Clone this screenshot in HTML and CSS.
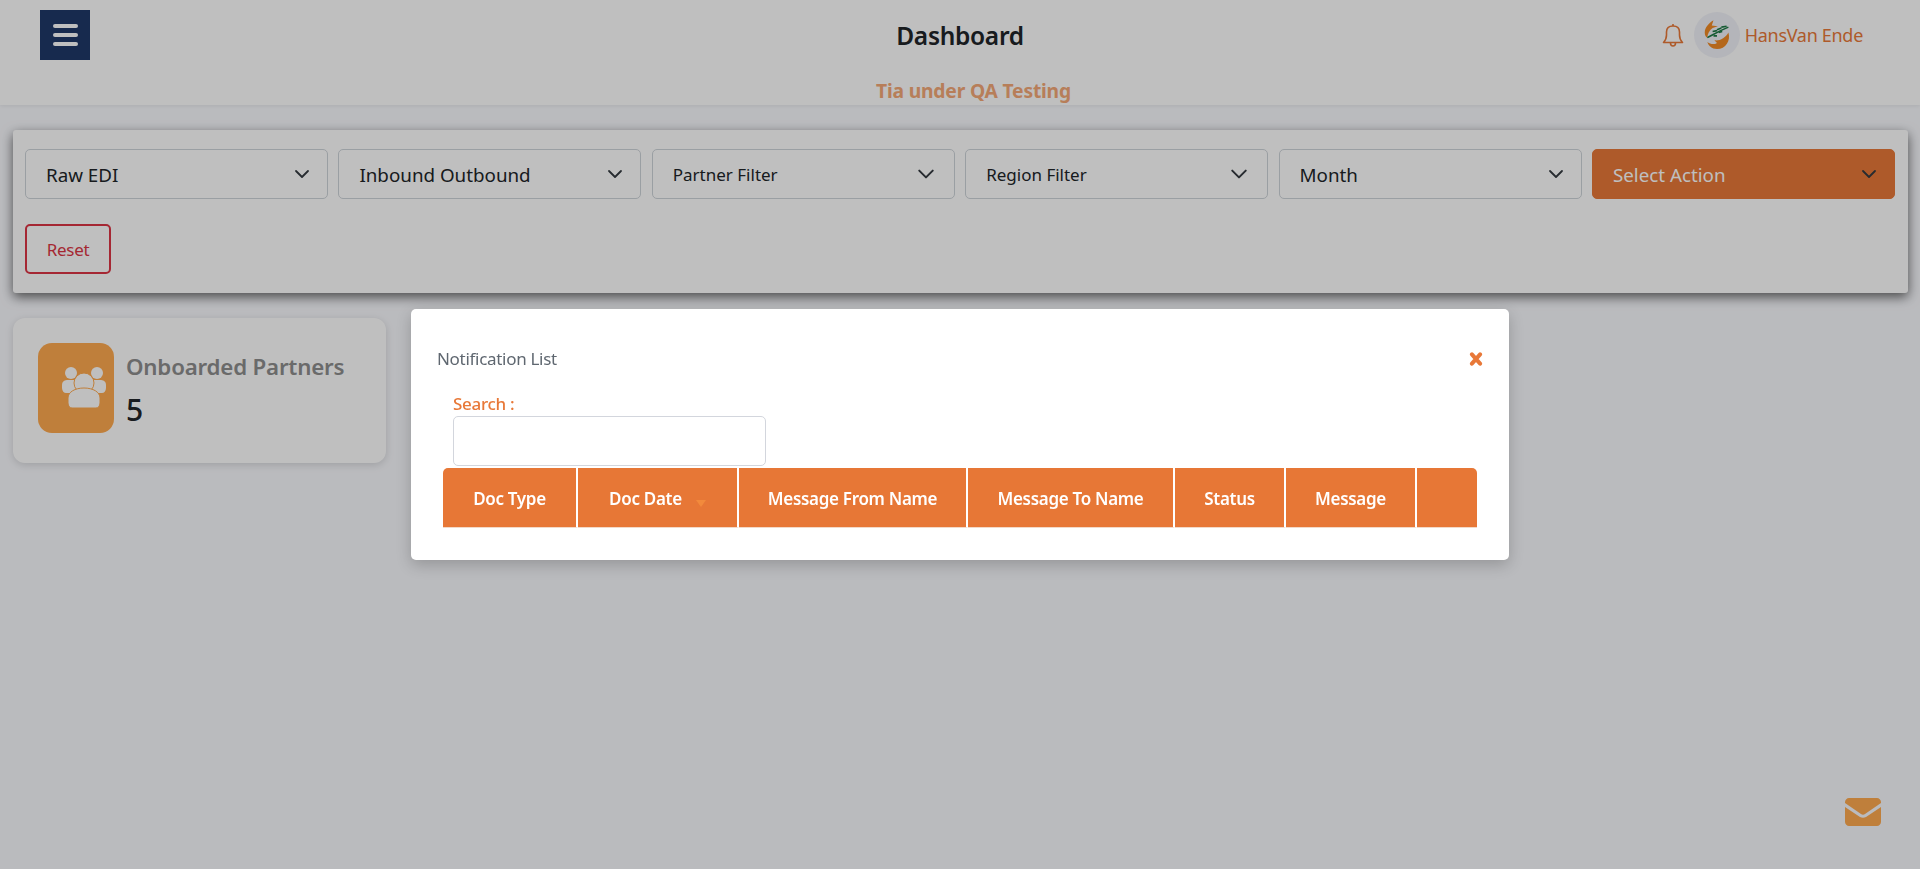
FILE: index.html
```html
<!DOCTYPE html>
<html lang="en">

<head>
    <meta charset="UTF-8">
    <meta name="viewport" content="width=device-width, initial-scale=1.0">
    <title>Dashboard</title>
    <link rel="stylesheet" href="styles.css">
</head>

<body>
    <header class="top-bar">
        <div class="top-row">
            <button type="button" class="menu-btn" aria-label="Menu">
                <span></span><span></span><span></span>
            </button>
            <h1 class="page-title">Dashboard</h1>
            <div class="user-box">
                <svg class="bell" viewBox="0 0 22 24" fill="none" stroke="#e87938" stroke-width="1.6">
                    <path d="M1.500 19.500c2-2 3-4 3-7.500V9c0-3.800 2.600-6 6.500-6s6.500 2.200 6.500 6v3c0 3.500 1 5.500 3 7.500z" stroke-linejoin="round"/>
                    <path d="M11 1v2M8.500 20c0 2 1 3 2.500 3s2.500-1 2.500-3"/>
                </svg>
                <div class="avatar">
                    <svg viewBox="0 0 32 34">
                        <path d="M12 0C7 3 2 8 2 14c0 3 1 5 3 6 0-4 2-8 6-11l6-2-7-1z" fill="#f08a24"/>
                        <path d="M29 14c3 9-3 19-13 19-6 0-10-4-11-8 4 3 8 3 11 1l-3-3c6 1 13-3 16-9z" fill="#f08a24"/>
                        <path d="M5 20c6-3 12-7 24-12" fill="none" stroke="#1e7a46" stroke-width="1.800"/>
                        <path d="M11 13l5-1M16 11l5-2M21 8l6-1M12 18l4 0M18 14l4-1" fill="none" stroke="#1e7a46" stroke-width="1.800"/>
                    </svg>
                </div>
                <span class="user-name">HansVan Ende</span>
            </div>
        </div>
        <p class="env-note">Tia under QA Testing</p>
    </header>

    <main class="content">
        <section class="filter-card">
            <select class="filter"><option>Raw EDI</option></select>
            <select class="filter"><option>Inbound Outbound</option></select>
            <select class="filter filter-small"><option>Partner Filter</option></select>
            <select class="filter filter-small"><option>Region Filter</option></select>
            <select class="filter"><option>Month</option></select>
            <select class="filter filter-action"><option>Select Action</option></select>
            <button type="button" class="reset-btn">Reset</button>
        </section>

        <section class="stat-card">
            <div class="stat-icon">
                <svg viewBox="0 0 44 42" fill="#fff">
                    <circle cx="9" cy="6" r="6"/>
                    <circle cx="35" cy="6" r="6"/>
                    <path d="M0 18c0-4 3-5 6-5h32c3 0 6 1 6 5v3c0 3-2 5-4 5H4c-2 0-4-2-4-5z"/>
                    <circle cx="22" cy="16" r="10" stroke="#ffaa4f" stroke-width="1"/>
                    <path d="M6 36v-5c0-6 7-10 16-10s16 4 16 10v5c0 3-2 5-4 5H10c-2 0-4-2-4-5z" stroke="#ffaa4f" stroke-width="1"/>
                </svg>
            </div>
            <div class="stat-text">
                <div class="stat-label">Onboarded Partners</div>
                <div class="stat-value">5</div>
            </div>
        </section>
    </main>

    <svg class="mail-icon" viewBox="0 0 36 28">
        <path d="M4 0h28c2 0 4 2 4 4v1L20 16c-1 1-3 1-4 0L0 5V4c0-2 2-4 4-4z" fill="#ffaa4f"/>
        <path d="M0 9l15 10c2 1 4 1 6 0L36 9v15c0 2-2 4-4 4H4c-2 0-4-2-4-4z" fill="#ffaa4f"/>
    </svg>

    <div class="backdrop"></div>

    <div class="modal">
        <div class="modal-head">
            <span class="modal-title">Notification List</span>
            <svg class="close-icon" viewBox="0 0 12 12">
                <path d="M2.500 2l7 8M9.500 2l-7 8" stroke="#e87838" stroke-width="3.400" stroke-linecap="round"/>
            </svg>
        </div>
        <div class="search-box">
            <label for="search">Search :</label>
            <input type="text" id="search">
        </div>
        <table class="notif-table">
            <thead>
                <tr>
                    <th class="col-type">Doc Type</th>
                    <th class="col-date">Doc Date <span class="sort-caret"></span></th>
                    <th class="col-from">Message From Name</th>
                    <th class="col-to">Message To Name</th>
                    <th class="col-status">Status</th>
                    <th class="col-msg">Message</th>
                    <th></th>
                </tr>
            </thead>
        </table>
    </div>
</body>

</html>
```

FILE: styles.css
```css
* {
    box-sizing: border-box;
}

body {
    font-family: "Noto Sans", "Open Sans", sans-serif;
    background-color: #f9fafe;
    color: #212529;
    margin: 0;
    height: 100vh;
    overflow: hidden;
}

.top-bar {
    background-color: #fff;
    height: 105px;
    padding: 10px 40px 0;
    box-shadow: 0 1px 4px rgba(0, 0, 0, 0.08);
}

.top-row {
    display: grid;
    grid-template-columns: 1fr auto 1fr;
    align-items: center;
}

.menu-btn {
    width: 50px;
    height: 50px;
    background-color: #1f3869;
    border: none;
    padding: 0;
    display: flex;
    flex-direction: column;
    align-items: center;
    justify-content: center;
    gap: 5px;
}

.menu-btn span {
    width: 25px;
    height: 4px;
    border-radius: 2px;
    background-color: #fff;
}

.page-title {
    margin: 0;
    font-size: 24.500px;
    font-weight: 600;
    letter-spacing: -0.3px;
}

.user-box {
    display: flex;
    align-items: center;
    justify-content: flex-end;
    padding-right: 17px;
}

.bell {
    width: 22px;
    height: 24px;
    margin-right: 10px;
}

.avatar {
    width: 46px;
    height: 46px;
    border-radius: 50%;
    background-color: #f1f2f8;
    display: flex;
    align-items: center;
    justify-content: center;
    margin-right: 5px;
}

.avatar svg {
    width: 28px;
    height: 30px;
}

.user-name {
    font-size: 18px;
    color: #e87938;
    letter-spacing: -0.3px;
}

.env-note {
    margin: 18px 0 0 27px;
    text-align: center;
    font-size: 19.300px;
    line-height: 26px;
    font-weight: 700;
    color: #f4a877;
    letter-spacing: -0.2px;
}

.content {
    padding: 25px 12px 0 13px;
}

.filter-card {
    background-color: #fff;
    border-radius: 3px;
    box-shadow: 0 4px 12px rgba(0, 0, 0, 0.6);
    padding: 19px 12px 20px;
    display: flex;
    flex-wrap: wrap;
    gap: 25px 10.400px;
    height: 163px;
    align-content: flex-start;
}

.filter {
    width: 303px;
    height: 50px;
    padding: 1px 40px 0 20px;
    font-family: inherit;
    font-size: 18.800px;
    color: #212529;
    background-color: #fff;
    border: 1px solid #ced4da;
    border-radius: 5px;
    appearance: none;
    background-image: url("data:image/svg+xml,%3Csvg xmlns='http://www.w3.org/2000/svg' viewBox='0 0 16 16'%3E%3Cpath fill='none' stroke='%23343a40' stroke-linecap='round' stroke-linejoin='round' stroke-width='1.8' d='M2 5l6 6 6-6'/%3E%3C/svg%3E");
    background-repeat: no-repeat;
    background-position: right 17px center;
    background-size: 16px 16px;
}

.filter-small {
    font-size: 17px;
    padding-top: 0;
    background-position: right 19px center;
    background-size: 18px 18px;
}

.filter-action {
    background-color: #e87938;
    border-color: #e87938;
    color: #fff;
}

.reset-btn {
    width: 86px;
    height: 50px;
    background-color: #fff;
    color: #dc3545;
    border: 2px solid #dc3545;
    border-radius: 5px;
    font-family: inherit;
    font-size: 17px;
    letter-spacing: -0.3px;
}

.stat-card {
    width: 373px;
    height: 145px;
    margin-top: 25px;
    background-color: #fff;
    border-radius: 12px;
    box-shadow: 0 2px 8px rgba(0, 0, 0, 0.15);
    padding: 25px;
    display: flex;
    gap: 12px;
}

.stat-icon {
    width: 76px;
    height: 90px;
    border-radius: 14px;
    background-color: #ffaa4f;
    display: flex;
    align-items: center;
    padding-left: 24px;
}

.stat-icon svg {
    width: 44px;
    height: 42px;
}

.stat-label {
    font-size: 22.300px;
    font-weight: 600;
    color: #8e8e8e;
    margin-top: 8px;
    letter-spacing: -0.2px;
}

.stat-value {
    font-size: 30px;
    font-weight: 500;
    line-height: 40px;
    margin-top: 8px;
}

.mail-icon {
    position: absolute;
    left: 1845px;
    top: 798px;
    width: 36px;
    height: 28px;
}

.backdrop {
    position: fixed;
    inset: 0;
    background-color: #000;
    opacity: 0.25;
}

.modal {
    position: absolute;
    left: 411px;
    top: 309px;
    width: 1098px;
    height: 251px;
    background-color: #fff;
    border-radius: 5px;
    box-shadow: 0 5px 15px rgba(0, 0, 0, 0.2);
    padding: 0 32px;
}

.modal-head {
    height: 60px;
    padding-top: 39px;
    margin: 0 -6px;
    display: flex;
    justify-content: space-between;
    align-items: center;
}

.modal-title {
    font-size: 17px;
    color: #5f6770;
    letter-spacing: -0.3px;
}

.close-icon {
    width: 14px;
    height: 14px;
    margin-top: 1px;
}

.search-box {
    margin-top: 23px;
    margin-left: 10px;
}

.search-box label {
    display: block;
    height: 24px;
    font-size: 17px;
    font-weight: 500;
    color: #e87838;
    line-height: 24px;
    letter-spacing: -0.3px;
}

.search-box input {
    display: block;
    width: 313px;
    height: 50px;
    border: 1px solid #d3d6dd;
    border-radius: 5px;
    background-color: #fff;
}

.notif-table {
    width: 1034px;
    height: 60px;
    margin-top: 2px;
    border-collapse: separate;
    border-spacing: 0;
    table-layout: fixed;
    background-color: #e77736;
    border-radius: 5px 5px 0 0;
}

.notif-table th {
    color: #fff;
    font-size: 17px;
    font-weight: 600;
    letter-spacing: -0.3px;
    text-align: center;
    padding: 2px 0 0;
    border-right: 2px solid #fff;
    border-bottom: 1px solid #f3d9c8;
    white-space: nowrap;
}

.notif-table th:last-child {
    border-right: none;
}

.col-type {
    width: 135px;
}

.col-date {
    width: 161px;
}

.col-from {
    width: 229px;
}

.col-to {
    width: 207px;
}

.col-status {
    width: 111px;
}

.col-msg {
    width: 131px;
}

.sort-caret {
    display: inline-block;
    width: 0;
    height: 0;
    margin-left: 10px;
    border-left: 5px solid transparent;
    border-right: 5px solid transparent;
    border-top: 7px solid #f28a3c;
    vertical-align: -2px;
}
```
